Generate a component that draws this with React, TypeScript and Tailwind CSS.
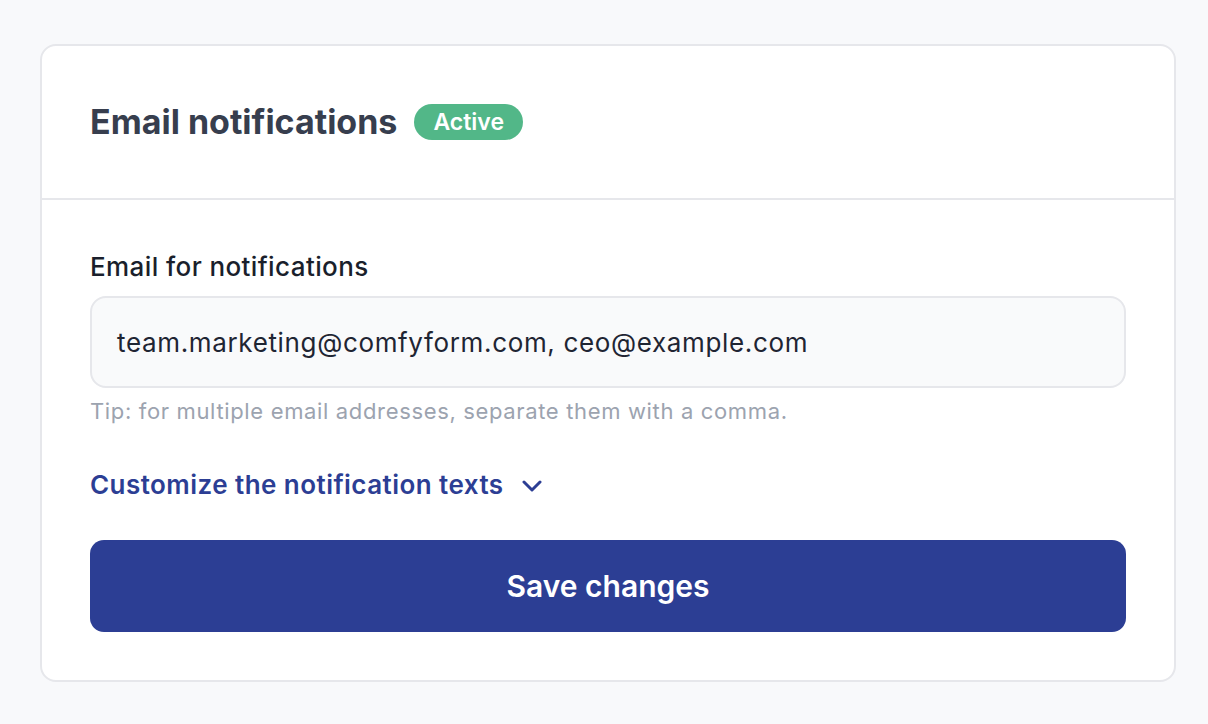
import React from "react";

export default function App() {
  return (
    <div
      className="min-h-[724px] w-full bg-[#f8f9fb] pt-[44px] pl-[40px]"
      style={{ fontFamily: "Inter, 'Noto Sans', sans-serif" }}
    >
      <div className="w-[1136px] rounded-[16px] border-2 border-[#e6e7eb] bg-white">
        <div className="flex items-center gap-[17px] border-b-2 border-[#e6e7eb] px-[48px] py-[48px]">
          <h1 className="flex h-[56px] items-center text-[34px] leading-[56px] font-bold text-[#373e4e]">
            Email notifications
          </h1>
          <span className="flex h-[36px] items-center rounded-full bg-[#52b788] px-[19px] text-[23px] leading-[36px] font-semibold text-white">
            Active
          </span>
        </div>
        <div className="px-[48px] pt-[51px] pb-[48px]">
          <label className="block text-[26px] leading-[32px] font-medium tracking-[0.4px] text-[#1a1f2c]">
            Email for notifications
          </label>
          <div className="mt-[13px] flex h-[92px] items-center rounded-[16px] border-2 border-[#e6e7eb] bg-[#f9fafb] px-[25px] text-[26px] tracking-[0.65px] text-[#1f2533]">
            team.marketing@comfyform.com, ceo@example.com
          </div>
          <p className="mt-[9px] text-[22px] leading-[28px] tracking-[0.65px] text-[#9ca3af]">
            Tip: for multiple email addresses, separate them with a comma.
          </p>
          <button className="mt-[44px] flex items-center gap-[18px] text-[26px] leading-[32px] font-semibold tracking-[0.45px] text-[#2c3e94]">
            Customize the notification texts
            <svg width="20" height="13" viewBox="0 0 20 13" fill="none" className="mt-[2px]">
              <path d="M2 2 L10 10 L18 2" stroke="#2c3e94" strokeWidth="3" strokeLinecap="round" strokeLinejoin="round" />
            </svg>
          </button>
          <button className="mt-[39px] flex h-[92px] w-full items-center justify-center rounded-[14px] bg-[#2c3e94] text-[30px] font-semibold text-white">
            Save changes
          </button>
        </div>
      </div>
    </div>
  );
}
